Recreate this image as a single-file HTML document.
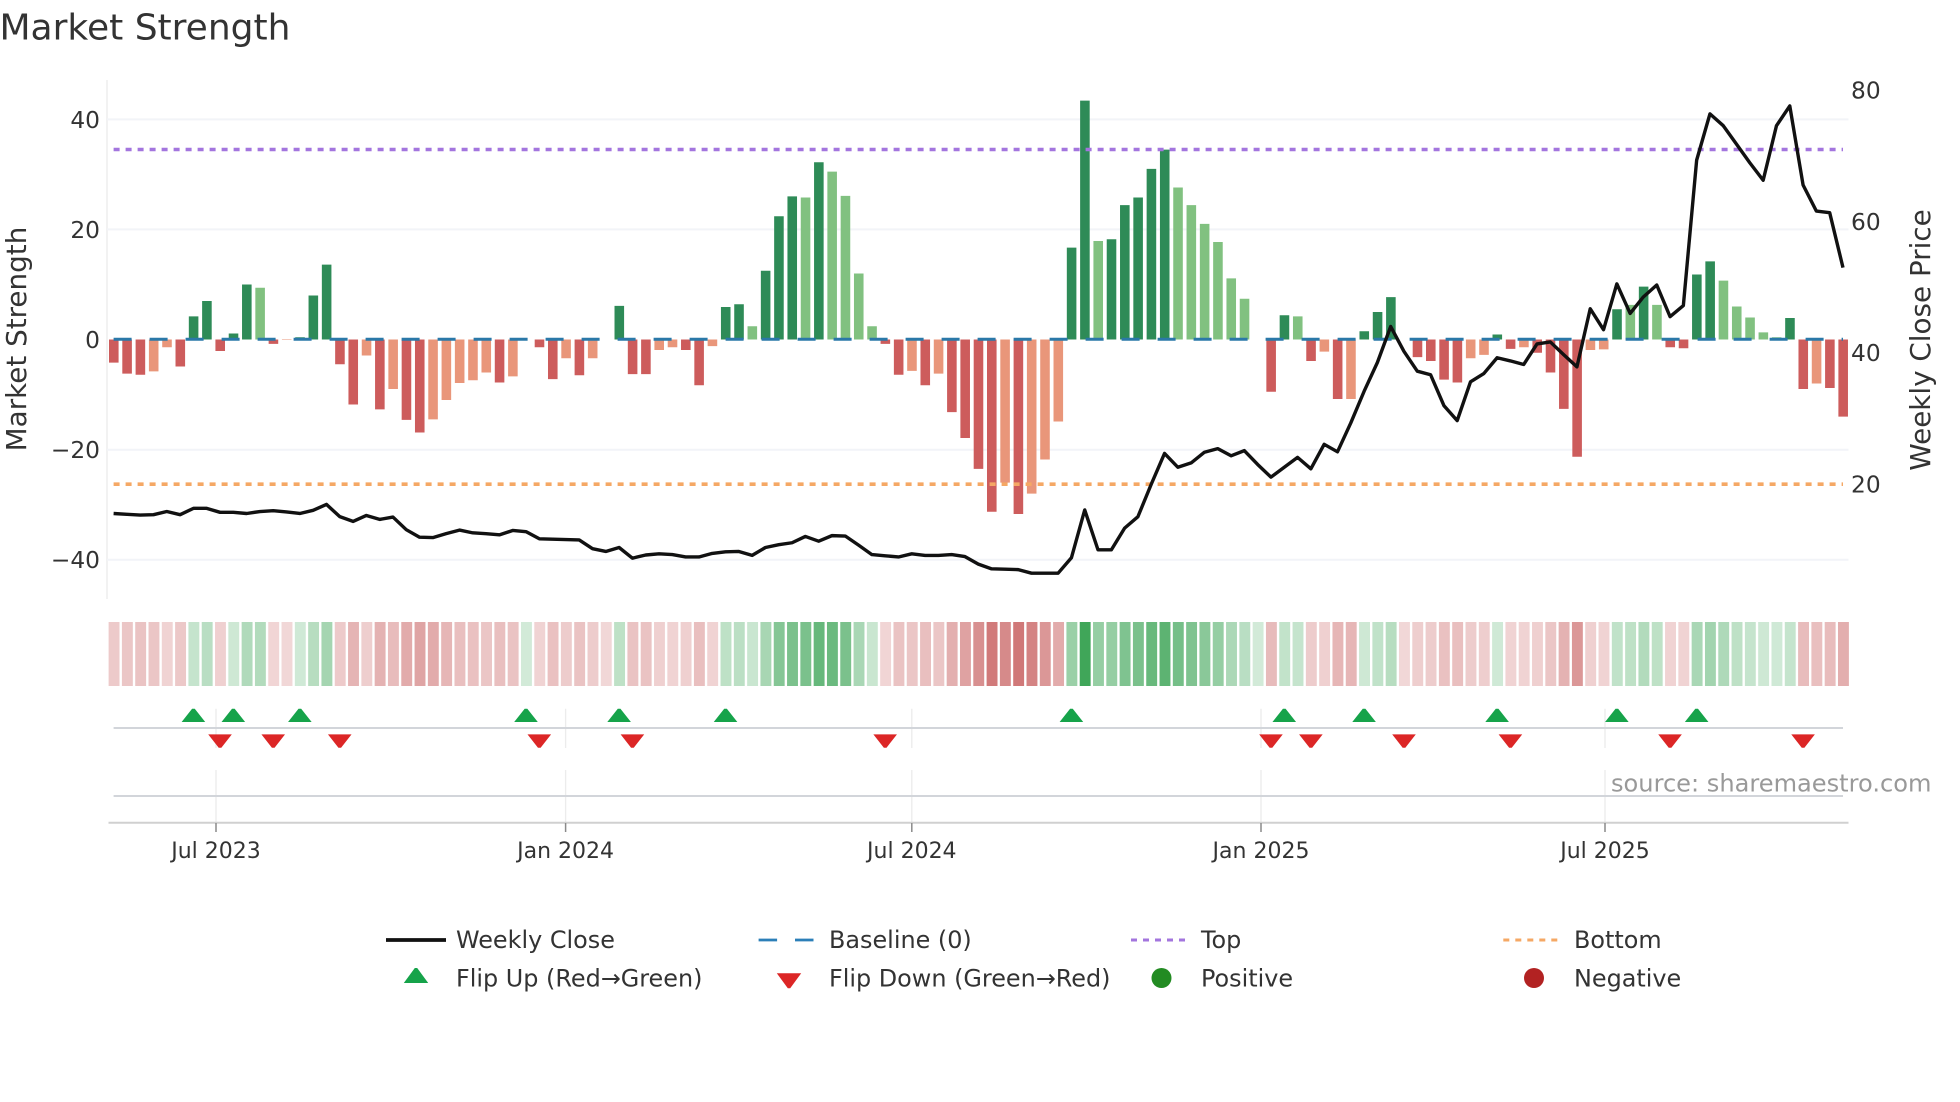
<!DOCTYPE html>
<html lang="en">
<head>
<meta charset="utf-8">
<title>Market Strength</title>
<style>
html,body{margin:0;padding:0;background:#fff;width:1960px;height:1102px;overflow:hidden}
svg{display:block;position:absolute;left:0;top:0}
text{font-family:"DejaVu Sans","Liberation Sans",sans-serif;fill:#333}
.tick{font-size:23.3px}
.xt{font-size:22px;text-anchor:middle}
.lg{font-size:23.9px}
.s rect{width:.82px;height:64px}
.r{fill:#b22222}
.g{fill:#1e963c}
</style>
</head>
<body>
<svg width="1960" height="1102" viewBox="0 0 1960 1102" xmlns="http://www.w3.org/2000/svg">
<rect width="1960" height="1102" fill="#fff"/>
<text x="-0.5" y="39.5" font-size="36">Market Strength</text>

<!-- grid -->
<path d="M107 80V599" stroke="#eeeeee" stroke-width="1.5" fill="none"/>
<path d="M107 119.4H1848.5M107 229.4H1848.5M107 449.8H1848.5M107 559.8H1848.5" stroke="#f2f4f8" stroke-width="2" fill="none"/>

<!-- bars -->
<g transform="translate(109 339.5) scale(13.303 5.505)">
<path fill="#2e8b57" d="M6 0h.72v-4.2h-.72zM7 0h.72v-7h-.72zM9 0h.72v-1.1h-.72zM10 0h.72v-10h-.72zM14 0h.72v-.4h-.72zM15 0h.72v-8h-.72zM16 0h.72v-13.6h-.72zM38 0h.72v-6.1h-.72zM46 0h.72v-5.9h-.72zM47 0h.72v-6.4h-.72zM49 0h.72v-12.5h-.72zM50 0h.72v-22.4h-.72zM51 0h.72v-26h-.72zM53 0h.72v-32.2h-.72zM72 0h.72v-16.7h-.72zM73 0h.72v-43.4h-.72zM75 0h.72v-18.2h-.72zM76 0h.72v-24.4h-.72zM77 0h.72v-25.8h-.72zM78 0h.72v-31h-.72zM79 0h.72v-34.5h-.72zM88 0h.72v-4.4h-.72zM94 0h.72v-1.5h-.72zM95 0h.72v-5h-.72zM96 0h.72v-7.7h-.72zM104 0h.72v-.9h-.72zM113 0h.72v-5.5h-.72zM115 0h.72v-9.6h-.72zM119 0h.72v-11.8h-.72zM120 0h.72v-14.2h-.72zM126 0h.72v-3.9h-.72z"/>
<path fill="#81c180" d="M11 0h.72v-9.4h-.72zM48 0h.72v-2.4h-.72zM52 0h.72v-25.8h-.72zM54 0h.72v-30.5h-.72zM55 0h.72v-26.1h-.72zM56 0h.72v-12h-.72zM57 0h.72v-2.4h-.72zM74 0h.72v-17.9h-.72zM80 0h.72v-27.6h-.72zM81 0h.72v-24.4h-.72zM82 0h.72v-21h-.72zM83 0h.72v-17.7h-.72zM84 0h.72v-11.1h-.72zM85 0h.72v-7.4h-.72zM89 0h.72v-4.2h-.72zM114 0h.72v-6.3h-.72zM116 0h.72v-6.3h-.72zM121 0h.72v-10.7h-.72zM122 0h.72v-6h-.72zM123 0h.72v-4h-.72zM124 0h.72v-1.3h-.72zM125 0h.72v-.4h-.72z"/>
<path fill="#cd5c5c" d="M0 0h.72v4.2h-.72zM1 0h.72v6.2h-.72zM2 0h.72v6.4h-.72zM5 0h.72v4.9h-.72zM8 0h.72v2.1h-.72zM12 0h.72v.8h-.72zM17 0h.72v4.5h-.72zM18 0h.72v11.8h-.72zM20 0h.72v12.7h-.72zM22 0h.72v14.6h-.72zM23 0h.72v16.9h-.72zM29 0h.72v7.8h-.72zM32 0h.72v1.4h-.72zM33 0h.72v7.2h-.72zM35 0h.72v6.5h-.72zM39 0h.72v6.3h-.72zM40 0h.72v6.3h-.72zM43 0h.72v1.9h-.72zM44 0h.72v8.3h-.72zM58 0h.72v.8h-.72zM59 0h.72v6.4h-.72zM61 0h.72v8.3h-.72zM63 0h.72v13.2h-.72zM64 0h.72v17.9h-.72zM65 0h.72v23.5h-.72zM66 0h.72v31.3h-.72zM68 0h.72v31.7h-.72zM87 0h.72v9.5h-.72zM90 0h.72v3.9h-.72zM92 0h.72v10.8h-.72zM98 0h.72v3.2h-.72zM99 0h.72v3.9h-.72zM100 0h.72v7.3h-.72zM101 0h.72v7.8h-.72zM105 0h.72v1.7h-.72zM107 0h.72v2.4h-.72zM108 0h.72v6h-.72zM109 0h.72v12.6h-.72zM110 0h.72v21.3h-.72zM117 0h.72v1.4h-.72zM118 0h.72v1.6h-.72zM127 0h.72v9h-.72zM129 0h.72v8.8h-.72zM130 0h.72v14h-.72z"/>
<path fill="#e9967a" d="M3 0h.72v5.8h-.72zM4 0h.72v1.4h-.72zM13 0h.72v.1h-.72zM19 0h.72v2.9h-.72zM21 0h.72v9h-.72zM24 0h.72v14.5h-.72zM25 0h.72v11h-.72zM26 0h.72v7.9h-.72zM27 0h.72v7.4h-.72zM28 0h.72v6h-.72zM30 0h.72v6.7h-.72zM34 0h.72v3.4h-.72zM36 0h.72v3.4h-.72zM41 0h.72v1.9h-.72zM42 0h.72v1.4h-.72zM45 0h.72v1.2h-.72zM60 0h.72v5.7h-.72zM62 0h.72v6.2h-.72zM67 0h.72v26h-.72zM69 0h.72v28h-.72zM70 0h.72v21.8h-.72zM71 0h.72v14.9h-.72zM91 0h.72v2.2h-.72zM93 0h.72v10.8h-.72zM102 0h.72v3.4h-.72zM103 0h.72v2.8h-.72zM106 0h.72v1.4h-.72zM111 0h.72v1.9h-.72zM112 0h.72v1.8h-.72zM128 0h.72v8h-.72z"/>
</g>

<!-- reference lines -->
<path d="M113.6 339.2H1843" stroke="#2a78a8" stroke-width="3" stroke-dasharray="18 18" fill="none"/>
<path d="M113.6 149.5H1843" stroke="#a375de" stroke-width="3.6" stroke-dasharray="6 6" fill="none"/>
<path d="M113.6 484.2H1843" stroke="#f5a865" stroke-width="3.6" stroke-dasharray="6 6" fill="none"/>

<!-- weekly close -->
<g transform="translate(113.6 0) scale(13.303 .3953)">
<polyline fill="none" stroke="#111" stroke-width="3.4" stroke-linejoin="round" vector-effect="non-scaling-stroke" points="0,1299 1,1301 2,1303 3,1302 4,1294 5,1302 6,1286 7,1286 8,1296 9,1296 10,1299 11,1294 12,1292 13,1295 14,1299 15,1291 16,1276 17,1307 18,1319 19,1304 20,1314 21,1308 22,1340 23,1359 24,1360 25,1350 26,1341 27,1348 28,1350 29,1353 30,1342 31,1345 32,1363 33,1364 34,1365 35,1366 36,1388 37,1395 38,1385 39,1412 40,1404 41,1401 42,1403 43,1409 44,1409 45,1400 46,1396 47,1395 48,1405 49,1385 50,1378 51,1373 52,1357 53,1369 54,1355 55,1356 56,1379 57,1403 58,1406 59,1409 60,1401 61,1405 62,1405 63,1403 64,1408 65,1427 66,1439 67,1440 68,1441 69,1450 70,1450 71,1450 72,1411 73,1290 74,1391 75,1391 76,1336 77,1307 78,1225 79,1147 80,1182 81,1171 82,1144 83,1135 84,1153 85,1140 86,1175 87,1207 88,1182 89,1157 90,1186 91,1124 92,1143 93,1070 94,990 95,917 96,826 97,889 98,939 99,948 100,1026 101,1064 102,966 103,945 104,905 105,913 106,922 107,870 108,865 109,897 110,928 111,781 112,834 113,718 114,793 115,751 116,721 117,801 118,773 119,405 120,288 121,318 122,365 123,412 124,456 125,318 126,268 127,468 128,534 129,538 130,677"/>
</g>

<!-- y ticks -->
<g class="tick" text-anchor="end">
<text x="100" y="128">40</text>
<text x="100" y="238">20</text>
<text x="100" y="348">0</text>
<text x="100" y="458">−20</text>
<text x="100" y="568">−40</text>
</g>
<g class="tick">
<text x="1851" y="98.5">80</text>
<text x="1851" y="230">60</text>
<text x="1851" y="361">40</text>
<text x="1851" y="492.5">20</text>
</g>
<text transform="translate(26 339) rotate(-90)" text-anchor="middle" font-size="27.8">Market Strength</text>
<text transform="translate(1930 340) rotate(-90)" text-anchor="middle" font-size="27.8">Weekly Close Price</text>

<!-- heat strip -->
<g class="s" transform="translate(108.6 622) scale(13.303 1)">
<rect class="r" x="0" opacity=".24"/><rect class="r" x="1" opacity=".26"/><rect class="r" x="2" opacity=".27"/><rect class="r" x="3" opacity=".26"/><rect class="r" x="4" opacity=".2"/><rect class="r" x="5" opacity=".25"/><rect class="g" x="6" opacity=".26"/><rect class="g" x="7" opacity=".31"/><rect class="r" x="8" opacity=".21"/><rect class="g" x="9" opacity=".22"/><rect class="g" x="10" opacity=".35"/><rect class="g" x="11" opacity=".34"/><rect class="r" x="12" opacity=".19"/><rect class="r" x="13" opacity=".18"/><rect class="g" x="14" opacity=".21"/><rect class="g" x="15" opacity=".32"/><rect class="g" x="16" opacity=".4"/><rect class="r" x="17" opacity=".24"/><rect class="r" x="18" opacity=".34"/><rect class="r" x="19" opacity=".22"/><rect class="r" x="20" opacity=".35"/><rect class="r" x="21" opacity=".3"/><rect class="r" x="22" opacity=".38"/><rect class="r" x="23" opacity=".41"/><rect class="r" x="24" opacity=".38"/><rect class="r" x="25" opacity=".33"/><rect class="r" x="26" opacity=".29"/><rect class="r" x="27" opacity=".28"/><rect class="r" x="28" opacity=".26"/><rect class="r" x="29" opacity=".29"/><rect class="r" x="30" opacity=".27"/><rect class="g" x="31" opacity=".2"/><rect class="r" x="32" opacity=".2"/><rect class="r" x="33" opacity=".28"/><rect class="r" x="34" opacity=".23"/><rect class="r" x="35" opacity=".27"/><rect class="r" x="36" opacity=".23"/><rect class="r" x="37" opacity=".18"/><rect class="g" x="38" opacity=".29"/><rect class="r" x="39" opacity=".27"/><rect class="r" x="40" opacity=".27"/><rect class="r" x="41" opacity=".21"/><rect class="r" x="42" opacity=".2"/><rect class="r" x="43" opacity=".21"/><rect class="r" x="44" opacity=".29"/><rect class="r" x="45" opacity=".2"/><rect class="g" x="46" opacity=".29"/><rect class="g" x="47" opacity=".3"/><rect class="g" x="48" opacity=".24"/><rect class="g" x="49" opacity=".39"/><rect class="g" x="50" opacity=".54"/><rect class="g" x="51" opacity=".59"/><rect class="g" x="52" opacity=".59"/><rect class="g" x="53" opacity=".68"/><rect class="g" x="54" opacity=".66"/><rect class="g" x="55" opacity=".59"/><rect class="g" x="56" opacity=".38"/><rect class="g" x="57" opacity=".24"/><rect class="r" x="58" opacity=".19"/><rect class="r" x="59" opacity=".27"/><rect class="r" x="60" opacity=".26"/><rect class="r" x="61" opacity=".29"/><rect class="r" x="62" opacity=".26"/><rect class="r" x="63" opacity=".36"/><rect class="r" x="64" opacity=".42"/><rect class="r" x="65" opacity=".5"/><rect class="r" x="66" opacity=".6"/><rect class="r" x="67" opacity=".53"/><rect class="r" x="68" opacity=".61"/><rect class="r" x="69" opacity=".56"/><rect class="r" x="70" opacity=".47"/><rect class="r" x="71" opacity=".38"/><rect class="g" x="72" opacity=".45"/><rect class="g" x="73" opacity=".85"/><rect class="g" x="74" opacity=".47"/><rect class="g" x="75" opacity=".47"/><rect class="g" x="76" opacity=".57"/><rect class="g" x="77" opacity=".59"/><rect class="g" x="78" opacity=".67"/><rect class="g" x="79" opacity=".72"/><rect class="g" x="80" opacity=".61"/><rect class="g" x="81" opacity=".57"/><rect class="g" x="82" opacity=".52"/><rect class="g" x="83" opacity=".47"/><rect class="g" x="84" opacity=".37"/><rect class="g" x="85" opacity=".31"/><rect class="g" x="86" opacity=".2"/><rect class="r" x="87" opacity=".31"/><rect class="g" x="88" opacity=".27"/><rect class="g" x="89" opacity=".26"/><rect class="r" x="90" opacity=".23"/><rect class="r" x="91" opacity=".21"/><rect class="r" x="92" opacity=".33"/><rect class="r" x="93" opacity=".33"/><rect class="g" x="94" opacity=".22"/><rect class="g" x="95" opacity=".28"/><rect class="g" x="96" opacity=".32"/><rect class="r" x="97" opacity=".18"/><rect class="r" x="98" opacity=".22"/><rect class="r" x="99" opacity=".23"/><rect class="r" x="100" opacity=".28"/><rect class="r" x="101" opacity=".29"/><rect class="r" x="102" opacity=".23"/><rect class="r" x="103" opacity=".22"/><rect class="g" x="104" opacity=".21"/><rect class="r" x="105" opacity=".2"/><rect class="r" x="106" opacity=".2"/><rect class="r" x="107" opacity=".21"/><rect class="r" x="108" opacity=".26"/><rect class="r" x="109" opacity=".35"/><rect class="r" x="110" opacity=".47"/><rect class="r" x="111" opacity=".21"/><rect class="r" x="112" opacity=".2"/><rect class="g" x="113" opacity=".28"/><rect class="g" x="114" opacity=".29"/><rect class="g" x="115" opacity=".34"/><rect class="g" x="116" opacity=".29"/><rect class="r" x="117" opacity=".2"/><rect class="r" x="118" opacity=".2"/><rect class="g" x="119" opacity=".38"/><rect class="g" x="120" opacity=".41"/><rect class="g" x="121" opacity=".36"/><rect class="g" x="122" opacity=".29"/><rect class="g" x="123" opacity=".26"/><rect class="g" x="124" opacity=".22"/><rect class="g" x="125" opacity=".21"/><rect class="g" x="126" opacity=".26"/><rect class="r" x="127" opacity=".3"/><rect class="r" x="128" opacity=".29"/><rect class="r" x="129" opacity=".3"/><rect class="r" x="130" opacity=".37"/>
</g>

<!-- lower panel grid -->
<path d="M216 708.7V748M216 770V822M565.6 708.7V748M565.6 770V822M911.8 708.7V748M911.8 770V822M1261 708.7V748M1261 770V822M1605 708.7V748M1605 770V822" stroke="#ececec" stroke-width="1.3" fill="none"/>
<path d="M113.6 728H1843M113.6 796H1843" stroke="#d2d5da" stroke-width="2" fill="none"/>
<path d="M108.5 822.7H1848.5" stroke="#d0d0d0" stroke-width="2" fill="none"/>
<path d="M216 823V832M565.6 823V832M911.8 823V832M1261 823V832M1605 823V832" stroke="#8a8a8a" stroke-width="1.5" fill="none"/>

<!-- flips -->
<g transform="translate(113.6 0) scale(13.303 1)">
<path fill="#16a34a" d="M5.9 708.7h.2l.787 13.3h-1.774zM8.9 708.7h.2l.787 13.3h-1.774zM13.9 708.7h.2l.787 13.3h-1.774zM30.9 708.7h.2l.787 13.3h-1.774zM37.9 708.7h.2l.787 13.3h-1.774zM45.9 708.7h.2l.787 13.3h-1.774zM71.9 708.7h.2l.787 13.3h-1.774zM87.9 708.7h.2l.787 13.3h-1.774zM93.9 708.7h.2l.787 13.3h-1.774zM103.9 708.7h.2l.787 13.3h-1.774zM112.9 708.7h.2l.787 13.3h-1.774zM118.9 708.7h.2l.787 13.3h-1.774z"/>
<path fill="#dc2626" d="M7.9 747.7h.2l.787-13.3h-1.774zM11.9 747.7h.2l.787-13.3h-1.774zM16.9 747.7h.2l.787-13.3h-1.774zM31.9 747.7h.2l.787-13.3h-1.774zM38.9 747.7h.2l.787-13.3h-1.774zM57.9 747.7h.2l.787-13.3h-1.774zM86.9 747.7h.2l.787-13.3h-1.774zM89.9 747.7h.2l.787-13.3h-1.774zM96.9 747.7h.2l.787-13.3h-1.774zM104.9 747.7h.2l.787-13.3h-1.774zM116.9 747.7h.2l.787-13.3h-1.774zM126.9 747.7h.2l.787-13.3h-1.774z"/>
</g>

<!-- x ticks -->
<text class="xt" x="216" y="858">Jul 2023</text>
<text class="xt" x="565.6" y="858">Jan 2024</text>
<text class="xt" x="911.8" y="858">Jul 2024</text>
<text class="xt" x="1261" y="858">Jan 2025</text>
<text class="xt" x="1605" y="858">Jul 2025</text>

<text x="1611" y="791.5" font-size="24.1" style="fill:#999">source: sharemaestro.com</text>

<!-- legend -->
<path d="M386 940H446" stroke="#111" stroke-width="3.8" fill="none"/>
<path d="M414.8 968h2.4l11 15h-24.400z" fill="#16a34a"/>
<text class="lg" x="456" y="948">Weekly Close</text>
<text class="lg" x="456" y="986.5">Flip Up (Red→Green)</text>

<path d="M758.6 940h18.5M795 940h18.5" stroke="#2b7fb8" stroke-width="2.8" fill="none"/>
<path d="M787.800 988.300h2.400l11-15h-24.400z" fill="#dc2626"/>
<text class="lg" x="829" y="948">Baseline (0)</text>
<text class="lg" x="829" y="986.5">Flip Down (Green→Red)</text>

<path d="M1131 940H1186" stroke="#a375de" stroke-width="3" stroke-dasharray="6 6" fill="none"/>
<circle cx="1161.5" cy="978" r="10" fill="#228b22"/>
<text class="lg" x="1201" y="948">Top</text>
<text class="lg" x="1201" y="986.5">Positive</text>

<path d="M1503.3 940H1558.5" stroke="#f5a865" stroke-width="3" stroke-dasharray="6 6" fill="none"/>
<circle cx="1534" cy="978" r="10" fill="#b22222"/>
<text class="lg" x="1574" y="948">Bottom</text>
<text class="lg" x="1574" y="986.5">Negative</text>
</svg>
</body>
</html>
